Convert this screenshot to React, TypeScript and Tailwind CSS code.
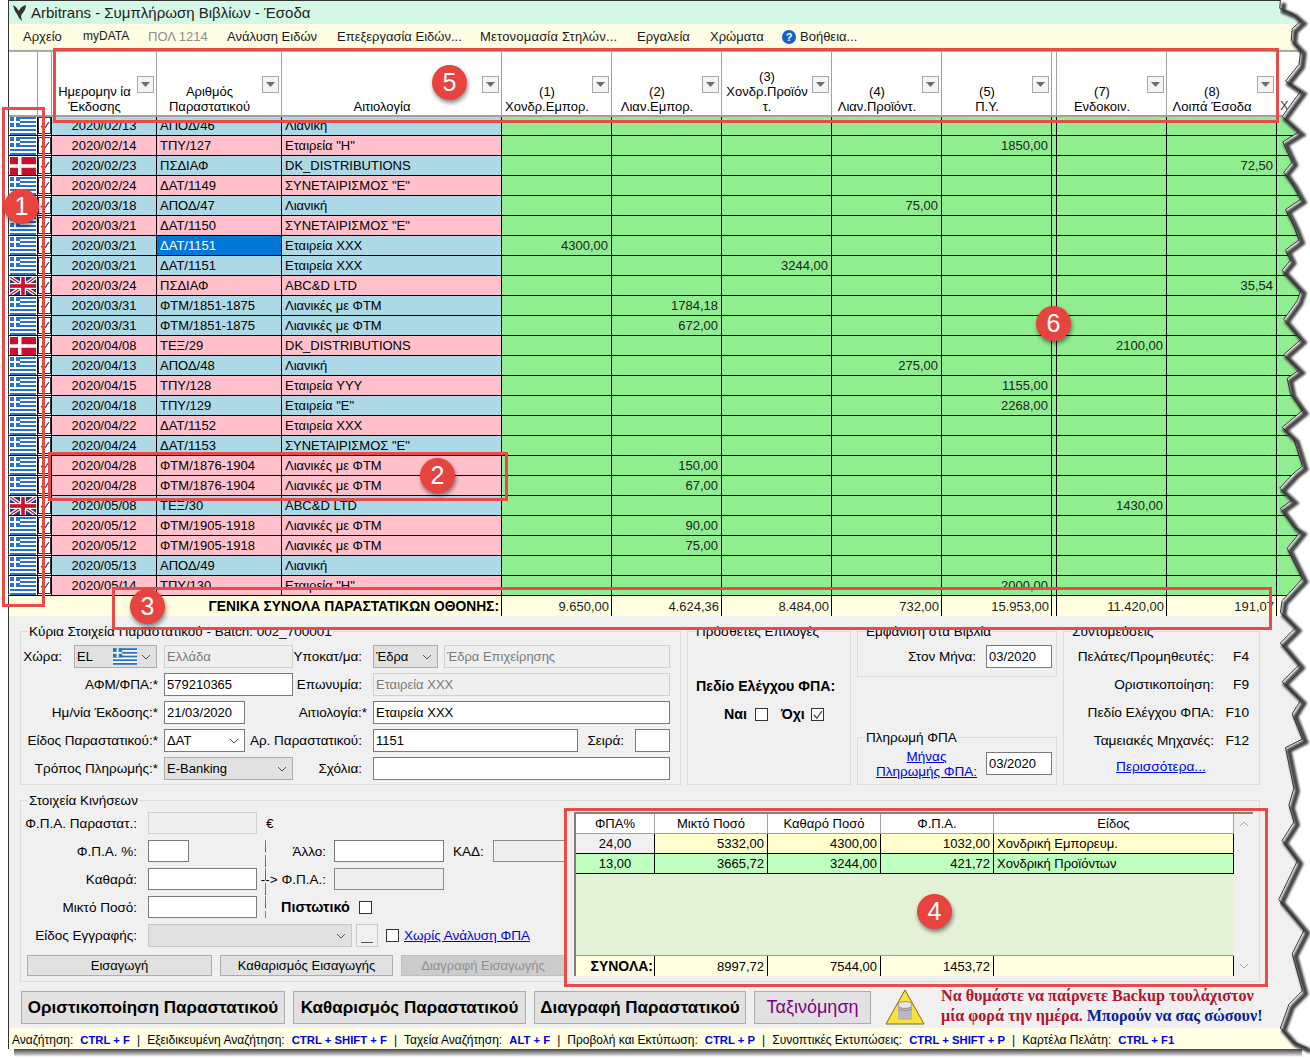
import React from "react";

type Row = { d: string; n: string; r: string; c: "b" | "p"; f?: "gr" | "dk" | "uk"; v?: Record<number, string>; sel?: boolean };

const L1 = "Λιανικές με ΦΤΜ";
const S = 'ΣΥΝΕΤΑΙΡΙΣΜΟΣ "Ε"';
const X = "Εταιρεία ΧΧΧ";
const rows: Row[] = [
  { d: "2020/02/13", n: "ΑΠΟΔ/46", r: "Λιανική", c: "b" },
  { d: "2020/02/14", n: "ΤΠΥ/127", r: 'Εταιρεία "Η"', c: "p", v: { 4: "1850,00" } },
  { d: "2020/02/23", n: "ΠΣΔΙΑΦ", r: "DK_DISTRIBUTIONS", c: "b", f: "dk", v: { 7: "72,50" } },
  { d: "2020/02/24", n: "ΔΑΤ/1149", r: S, c: "p" },
  { d: "2020/03/18", n: "ΑΠΟΔ/47", r: "Λιανική", c: "b", v: { 3: "75,00" } },
  { d: "2020/03/21", n: "ΔΑΤ/1150", r: S, c: "p" },
  { d: "2020/03/21", n: "ΔΑΤ/1151", r: X, c: "b", v: { 0: "4300,00" }, sel: true },
  { d: "2020/03/21", n: "ΔΑΤ/1151", r: X, c: "b", v: { 2: "3244,00" } },
  { d: "2020/03/24", n: "ΠΣΔΙΑΦ", r: "ABC&D LTD", c: "p", f: "uk", v: { 7: "35,54" } },
  { d: "2020/03/31", n: "ΦΤΜ/1851-1875", r: L1, c: "b", v: { 1: "1784,18" } },
  { d: "2020/03/31", n: "ΦΤΜ/1851-1875", r: L1, c: "b", v: { 1: "672,00" } },
  { d: "2020/04/08", n: "ΤΕΞ/29", r: "DK_DISTRIBUTIONS", c: "p", f: "dk", v: { 6: "2100,00" } },
  { d: "2020/04/13", n: "ΑΠΟΔ/48", r: "Λιανική", c: "b", v: { 3: "275,00" } },
  { d: "2020/04/15", n: "ΤΠΥ/128", r: "Εταιρεία YYY", c: "p", v: { 4: "1155,00" } },
  { d: "2020/04/18", n: "ΤΠΥ/129", r: 'Εταιρεία "Ε"', c: "b", v: { 4: "2268,00" } },
  { d: "2020/04/22", n: "ΔΑΤ/1152", r: X, c: "p" },
  { d: "2020/04/24", n: "ΔΑΤ/1153", r: S, c: "b" },
  { d: "2020/04/28", n: "ΦΤΜ/1876-1904", r: L1, c: "p", v: { 1: "150,00" } },
  { d: "2020/04/28", n: "ΦΤΜ/1876-1904", r: L1, c: "p", v: { 1: "67,00" } },
  { d: "2020/05/08", n: "ΤΕΞ/30", r: "ABC&D LTD", c: "b", f: "uk", v: { 6: "1430,00" } },
  { d: "2020/05/12", n: "ΦΤΜ/1905-1918", r: L1, c: "p", v: { 1: "90,00" } },
  { d: "2020/05/12", n: "ΦΤΜ/1905-1918", r: L1, c: "p", v: { 1: "75,00" } },
  { d: "2020/05/13", n: "ΑΠΟΔ/49", r: "Λιανική", c: "b" },
  { d: "2020/05/14", n: "ΤΠΥ/130", r: 'Εταιρεία "Η"', c: "p", v: { 4: "2000,00" } },
];

const numW = ["w-[110px]", "w-[110px]", "w-[110px]", "w-[110px]", "w-[110px]", "w-[5px]", "w-[110px]", "w-[110px]"];
const numMap = [0, 1, 2, 3, 4, -1, 6, 7];
const totals = ["9.650,00", "4.624,36", "8.484,00", "732,00", "15.953,00", "", "11.420,00", "191,07"];
const heads: { l: string[]; w: string }[] = [
  { l: ["(1)", "Χονδρ.Εμπορ."], w: "w-[110px]" },
  { l: ["(2)", "Λιαν.Εμπορ."], w: "w-[110px]" },
  { l: ["(3)", "Χονδρ.Προϊόν", "τ."], w: "w-[110px]" },
  { l: ["(4)", "Λιαν.Προϊόντ."], w: "w-[110px]" },
  { l: ["(5)", "Π.Υ."], w: "w-[110px]" },
  { l: [], w: "w-[5px]" },
  { l: ["(7)", "Ενδοκοιν."], w: "w-[110px]" },
  { l: ["(8)", "Λοιπά Έσοδα"], w: "w-[110px]" },
];
const bar = "w-[1px] bg-[repeating-linear-gradient(to_bottom,#a88a4a_0,#6b5a35_12px,transparent_12px,transparent_15px)]";

function Flag({ k = "gr", w = 26, h = 18 }: { k?: "gr" | "dk" | "uk"; w?: number; h?: number }) {
  if (k === "dk")
    return (
      <svg width={w} height={h} viewBox="0 0 26 18">
        <rect width="26" height="18" fill="#c8102e" />
        <rect x="8" width="3.5" height="18" fill="#fff" />
        <rect y="7.25" width="26" height="3.5" fill="#fff" />
      </svg>
    );
  if (k === "uk")
    return (
      <svg width={w} height={h} viewBox="0 0 26 18">
        <rect width="26" height="18" fill="#1f3a7a" />
        <path d="M0 0L26 18M26 0L0 18" stroke="#fff" strokeWidth="3.6" />
        <path d="M0 0L26 18M26 0L0 18" stroke="#c8102e" strokeWidth="1.3" />
        <rect x="10" width="6" height="18" fill="#fff" />
        <rect y="6" width="26" height="6" fill="#fff" />
        <rect x="11.2" width="3.6" height="18" fill="#c8102e" />
        <rect y="7.2" width="26" height="3.6" fill="#c8102e" />
      </svg>
    );
  const st = [0, 2, 4, 6, 8];
  return (
    <svg width={w} height={h} viewBox="0 0 26 18">
      <rect width="26" height="18" fill="#fff" />
      {st.map((i) => (
        <rect key={i} y={i * 2} width="26" height="2" fill="#2a72c4" />
      ))}
      <rect width="10" height="10" fill="#2a72c4" />
      <rect x="4" width="2" height="10" fill="#fff" />
      <rect y="4" width="10" height="2" fill="#fff" />
    </svg>
  );
}

function Chk({ on = true, s = "w-[13px] h-[13px]", c = "#444" }: { on?: boolean; s?: string; c?: string }) {
  return (
    <span className={`${s} shrink-0 bg-white border border-[#333] flex items-center justify-center`}>
      {on && (
        <svg width="10" height="10" viewBox="0 0 9 9" className="shrink-0">
          <path d="M1 4.5L3.5 7.5L8 1" fill="none" stroke={c} strokeWidth="1.1" />
        </svg>
      )}
    </span>
  );
}

function Chev({ c = "#555" }: { c?: string }) {
  return (
    <svg width="10" height="6" viewBox="0 0 10 6" className="shrink-0">
      <path d="M1 1L5 5L9 1" fill="none" stroke={c} strokeWidth="1" />
    </svg>
  );
}

function Lab({ w, children, cn = "" }: { w: string; children: React.ReactNode; cn?: string }) {
  return <span className={`${w} shrink-0 flex justify-end whitespace-nowrap ${cn}`}>{children}</span>;
}

function Inp({ w, v = "", dis = false, dark = false }: { w: string; v?: string; dis?: boolean; dark?: boolean }) {
  const st = dis
    ? "bg-[#efefef] border-[#d0d0d0] text-[#7a7a7a]"
    : dark
    ? "bg-[#efefef] border-[#8a8a8a]"
    : "bg-white border-[#7a7a7a]";
  return <span className={`${w} h-full shrink-0 border px-[2px] flex items-center whitespace-nowrap overflow-hidden text-[13px] ${st}`}>{v}</span>;
}

function Sel({ w, v, bg = "bg-[#e1e1e1] border-[#adadad]", flag = false, cn = "" }: { w: string; v: string; bg?: string; flag?: boolean; cn?: string }) {
  return (
    <span className={`${w} h-full shrink-0 border px-[2px] flex items-center text-[13px] ${bg} ${cn}`}>
      <span className="grow whitespace-nowrap">{v}</span>
      {flag && <span className="mr-[4px] flex"><Flag w={24} h={17} /></span>}
      <span className="mr-[3px] flex"><Chev /></span>
    </span>
  );
}

function Group({ title, w, h, children, cn = "" }: { title: string; w: string; h: string; children?: React.ReactNode; cn?: string }) {
  return (
    <div className={`${w} ${h} shrink-0 relative border border-[#dcdcdc] ${cn}`}>
      <span className="absolute left-[7px] top-[-8px] bg-[#f0f0f0] px-[1px] leading-[15px] whitespace-nowrap">{title}</span>
      {children}
    </div>
  );
}

function Red({ cn }: { cn: string }) {
  return <div className={`absolute border-[3px] border-[#e94c48] pointer-events-none ${cn}`} />;
}
function Dot({ n, cn }: { n: string; cn: string }) {
  return (
    <div className={`absolute w-[35px] h-[35px] rounded-full bg-[#e8443f] text-white text-[25px] leading-[35px] text-center shadow-[1px_3px_4px_rgba(0,0,0,0.45)] ${cn}`}>{n}</div>
  );
}

const Key = ({ t }: { t: string }) => <span className="font-bold text-[11.3px] text-[#0000e6] ml-[7px]">{t}</span>;
const Sep = () => <span className="mx-[7px]">|</span>;

const e1: [number, number][] = [[90,0],[88,25],[125,40],[150,62],[125,85],[122,120],[150,150],[145,190],[105,240],[150,270],[135,290],[95,345],[145,390],[97,420],[125,480],[100,510],[125,545],[150,590],[105,620],[130,670],[145,710],[105,740],[120,770],[95,800],[150,860],[140,890],[100,945],[150,1005],[100,1050],[145,1095],[110,1120],[120,1165],[155,1215],[95,1265],[130,1300],[155,1380],[130,1400],[88,1445],[125,1480],[90,1505],[130,1560]];
const e2: [number, number][] = [[150,10],[110,60],[155,150],[95,215],[90,250],[135,295],[90,340],[145,405],[95,455],[150,510],[125,550],[155,625],[105,650],[130,770],[115,820],[130,870],[95,925],[140,985],[85,1100],[160,1190],[125,1260],[155,1370],[115,1410],[90,1480],[125,1520],[170,1540]];
const edge = [
  ...e1.map(([x, y]) => [1250 + x / 2.96, y / 2.96]),
  ...e2.map(([x, y]) => [1250 + x / 2.96, 528 + y / 2.96]),
].map(([x, y]) => `${x.toFixed(1)},${y.toFixed(1)}`).join(" ");

export default function App() {
  return (
    <div className="relative w-[1310px] h-[1058px] bg-white overflow-hidden text-[13px] text-black font-[Liberation_Sans,Arial,sans-serif] leading-[15px]">
      <div className="ml-[8px] w-[1302px] h-[1049px] border-l border-t border-b border-[#333] bg-[#f0f0f0] flex flex-col">
        {/* title */}
        <div className="h-[23px] shrink-0 bg-[#d3f9e6] flex items-center pl-[3px] text-[15px]">
          <svg width="16" height="18" viewBox="0 0 16 18" className="mr-[3px]">
            <path d="M1 1C3 2 5 4 7 7C8 4 10 2 14 1C14 4 12 8 10 10L9 12L10 17L7 14L5 10C3 8 2 4 1 1Z" fill="#333" />
          </svg>
          <span className="text-[#222]">Arbitrans - Συμπλήρωση Βιβλίων - Έσοδα</span>
        </div>
        {/* menu */}
        <div className="h-[25px] shrink-0 bg-[#fdfde3] flex items-center pl-[14px] gap-[20px] text-[#1a1a1a] whitespace-nowrap">
          <span className="w-[40px]">Αρχείο</span>
          <span className="w-[45px] text-[12px]">myDATA</span>
          <span className="w-[59px] text-[#8f8f8f]">ΠΟΛ 1214</span>
          <span className="w-[90px]">Ανάλυση Ειδών</span>
          <span className="w-[123px]">Επεξεργασία Ειδών...</span>
          <span className="w-[137px] tracking-[0.2px]">Μετονομασία Στηλών...</span>
          <span className="w-[53px]">Εργαλεία</span>
          <span className="w-[56px]">Χρώματα</span>
          <span className="flex items-center gap-[4px] -ml-[4px]">
            <span className="w-[14px] h-[14px] rounded-full bg-[#1762c0] text-white font-bold text-[11px] leading-[14px] text-center">?</span>
            Βοήθεια...
          </span>
        </div>
        <div className="h-[3px] shrink-0 border-b-2 border-[#a9a9a9] bg-[#f0f0f0]" />
        {/* header */}
        <div className="h-[65px] shrink-0 bg-white border-b-2 border-[#a0a0a0] flex">
          <div className="w-[29px] shrink-0 border-r border-[#a0a0a0]" />
          <div className="w-[14px] shrink-0 border-r border-[#a0a0a0]" />
          {[
            { l: ["Ημερομην ία", "Έκδοσης"], w: "w-[105px]" },
            { l: ["Αριθμός", "Παραστατικού"], w: "w-[125px]" },
            { l: ["Αιτιολογία"], w: "w-[220px]" },
            ...heads,
          ].map((h, i) => (
            <div key={i} className={`${h.w} shrink-0 relative border-r border-[#a0a0a0] flex flex-col items-center justify-end pb-[1px] ${h.l.length > 0 ? "pr-[19px]" : ""} text-center`}>
              {h.l.map((t) => (
                <span key={t} className="whitespace-nowrap">{t}</span>
              ))}
              {h.l.length > 0 && (
                <span className="absolute top-[24px] right-[2px] w-[17px] h-[17px] bg-[#f4f4f4] border border-[#a8a8a8] flex items-center justify-center">
                  <svg width="9" height="5" viewBox="0 0 9 5"><path d="M0 0H9L4.5 5Z" fill="#6d6d6d" /></svg>
                </span>
              )}
            </div>
          ))}
          <div className="grow pt-[46px] pl-[3px] text-[#445]">Χ</div>
        </div>
        {/* body */}
        <div className="h-[479px] shrink-0 overflow-hidden">
          <div className="-mt-[1px]">
            {rows.map((r, i) => {
              const bg = r.c === "b" ? "bg-[#add8e6]" : "bg-[#ffc0cb]";
              return (
                <div key={i} className="h-[20px] flex border-b border-black bg-[#90ee90]">
                  <div className="w-[29px] shrink-0 bg-white border-r border-black flex items-center pl-[1px]"><Flag k={r.f ?? "gr"} /></div>
                  <div className="w-[14px] shrink-0 bg-white border-r border-black flex items-center justify-center"><Chk s="w-[13px] h-[17px]" /></div>
                  <div className={`w-[105px] shrink-0 ${bg} border-r border-black flex items-center justify-center`}>{r.d}</div>
                  <div className={`w-[125px] shrink-0 ${r.sel ? "bg-[#0078d7] text-white" : bg} border-r border-black flex items-center pl-[3px]`}>{r.n}</div>
                  <div className={`w-[220px] shrink-0 ${bg} border-r border-black flex items-center pl-[3px]`}>{r.r}</div>
                  {numW.map((w, k) => (
                    <div key={k} className={`${w} shrink-0 border-r border-black flex items-center justify-end pr-[3px] text-[#1c1c1c]`}>
                      {numMap[k] >= 0 ? r.v?.[numMap[k]] : null}
                    </div>
                  ))}
                  <div className="grow" />
                </div>
              );
            })}
          </div>
        </div>
        {/* totals */}
        <div className="h-[20px] shrink-0 flex bg-[#ffffe0]">
          <div className="w-[43px] shrink-0" />
          <div className="w-[450px] shrink-0 border-r border-black flex items-center justify-end pr-[2px] font-bold text-[13.8px] whitespace-nowrap">ΓΕΝΙΚΑ ΣΥΝΟΛΑ ΠΑΡΑΣΤΑΤΙΚΩΝ ΟΘΟΝΗΣ:</div>
          {numW.map((w, k) => (
            <div key={k} className={`${w} shrink-0 border-r border-black flex items-center justify-end pr-[2px] text-[#1c1c1c]`}>{totals[k]}</div>
          ))}
        </div>

        {/* form top row */}
        <div className="mt-[15px] ml-[11px] flex gap-[6px] h-[154px] shrink-0 text-[13.5px]">
          <Group title="Κύρια Στοιχεία Παραστατικού - Batch: 002_700001" w="w-[661px]" h="h-[154px]">
            <div className="pt-[13px] flex flex-col gap-[5px]">
              <div className="h-[23px] flex items-center">
                <Lab w="w-[41px]">Χώρα:</Lab>
                <Sel w="w-[83px] ml-[12px]" v="EL" flag bg="bg-[#e1e1e1] border-[#adadad]" />
                <span className="ml-[7px] h-full flex"><Inp w="w-[129px]" v="Ελλάδα" dis /></span>
                <Lab w="w-[69px]">Υποκατ/μα:</Lab>
                <Sel w="w-[65px] ml-[11px]" v="Έδρα" />
                <span className="ml-[6px] h-full flex"><Inp w="w-[226px]" v="Έδρα Επιχείρησης" dis /></span>
              </div>
              <div className="h-[23px] flex items-center">
                <Lab w="w-[137px]">ΑΦΜ/ΦΠΑ:*</Lab>
                <span className="ml-[6px] h-full flex"><Inp w="w-[129px]" v="579210365" /></span>
                <Lab w="w-[69px]">Επωνυμία:</Lab>
                <span className="ml-[11px] h-full flex"><Inp w="w-[297px]" v="Εταιρεία ΧΧΧ" dis /></span>
              </div>
              <div className="h-[23px] flex items-center">
                <Lab w="w-[137px]">Ημ/νία Έκδοσης:*</Lab>
                <span className="ml-[6px] h-full flex"><Inp w="w-[81px]" v="21/03/2020" /></span>
                <Lab w="w-[122px]">Αιτιολογία:*</Lab>
                <span className="ml-[6px] h-full flex"><Inp w="w-[297px]" v="Εταιρεία ΧΧΧ" /></span>
              </div>
              <div className="h-[23px] flex items-center">
                <Lab w="w-[137px]">Είδος Παραστατικού:*</Lab>
                <Sel w="w-[81px] ml-[6px]" v="ΔΑΤ" bg="bg-white border-[#7a7a7a]" />
                <Lab w="w-[117px]">Αρ. Παραστατικού:</Lab>
                <span className="ml-[11px] h-full flex"><Inp w="w-[205px]" v="1151" /></span>
                <Lab w="w-[46px]">Σειρά:</Lab>
                <span className="ml-[11px] h-full flex"><Inp w="w-[35px]" /></span>
              </div>
              <div className="h-[23px] flex items-center">
                <Lab w="w-[137px]">Τρόπος Πληρωμής:*</Lab>
                <Sel w="w-[129px] ml-[6px]" v="E-Banking" />
                <Lab w="w-[69px]">Σχόλια:</Lab>
                <span className="ml-[11px] h-full flex"><Inp w="w-[297px]" /></span>
              </div>
            </div>
          </Group>

          <Group title="Πρόσθετες Επιλογές" w="w-[164px]" h="h-[154px]">
            <div className="pt-[47px] pl-[8px] font-bold text-[14.2px] whitespace-nowrap">Πεδίο Ελέγχου ΦΠΑ:</div>
            <div className="mt-[13px] pl-[36px] flex items-center font-bold text-[14.2px]">
              <span className="w-[31px]">Ναι</span>
              <Chk on={false} />
              <span className="ml-[13px] w-[30px]">Όχι</span>
              <Chk />
            </div>
          </Group>

          <div className="w-[200px] shrink-0 h-[154px] flex flex-col justify-between">
            <Group title="Εμφάνιση στα Βιβλία" w="w-[200px]" h="h-[46px]">
              <div className="pt-[13px] h-[36px] flex">
                <Lab w="w-[118px]" cn="items-center">Στον Μήνα:</Lab>
                <span className="ml-[10px] flex"><Inp w="w-[66px]" v="03/2020" /></span>
              </div>
            </Group>
            <Group title="Πληρωμή ΦΠΑ" w="w-[200px]" h="h-[48px]">
              <div className="pt-[13px] h-[38px] flex items-center">
                <span className="ml-[19px] w-[99px] flex flex-col items-center text-[#0000e6] underline whitespace-nowrap">
                  <span>Μήνας</span>
                  <span>Πληρωμής ΦΠΑ:</span>
                </span>
                <span className="ml-[10px] h-[23px] flex"><Inp w="w-[66px]" v="03/2020" /></span>
              </div>
            </Group>
          </div>

          <Group title="Συντομεύσεις" w="w-[197px]" h="h-[154px]" cn="text-[13.7px]">
            <div className="pt-[10px] flex flex-col">
              {[
                ["Πελάτες/Προμηθευτές:", "F4"],
                ["Οριστικοποίηση:", "F9"],
                ["Πεδίο Ελέγχου ΦΠΑ:", "F10"],
                ["Ταμειακές Μηχανές:", "F12"],
              ].map(([a, b]) => (
                <div key={a} className="h-[28px] flex items-center whitespace-nowrap">
                  <Lab w="w-[150px]">{a}</Lab>
                  <span className="w-[35px] text-right">{b}</span>
                </div>
              ))}
              <div className="h-[24px] pl-[52px] flex items-center text-[#0000e6] underline">Περισσότερα...</div>
            </div>
          </Group>
        </div>

        {/* movements */}
        <div className="mt-[15px] ml-[11px] shrink-0 text-[13.5px]">
          <Group title="Στοιχεία Κινήσεων" w="w-[1240px]" h="h-[182px]" cn="flex">
            <div className="w-[553px] shrink-0 pt-[11px] flex flex-col">
              <div className="h-[22px] flex items-center">
                <Lab w="w-[116px]">Φ.Π.Α. Παραστατ.:</Lab>
                <span className="ml-[11px] h-full flex"><Inp w="w-[109px]" dis /></span>
                <span className="ml-[9px]">€</span>
              </div>
              <div className="h-[22px] mt-[6px] flex items-center">
                <Lab w="w-[116px]">Φ.Π.Α. %:</Lab>
                <span className="ml-[11px] h-full flex"><Inp w="w-[41px]" /></span>
                <span className={`ml-[76px] h-[28px] -mb-[6px] ${bar}`} />
                <Lab w="w-[60px]">Άλλο:</Lab>
                <span className="ml-[8px] h-full flex"><Inp w="w-[110px]" /></span>
                <span className="ml-[9px] w-[40px]">ΚΑΔ:</span>
                <span className="h-full flex"><Inp w="w-[72px]" dark /></span>
              </div>
              <div className="h-[22px] mt-[6px] flex items-center">
                <Lab w="w-[116px]">Καθαρά:</Lab>
                <span className="ml-[11px] h-full flex"><Inp w="w-[109px]" /></span>
                <span className={`ml-[8px] h-[28px] -mb-[6px] ${bar}`} />
                <Lab w="w-[60px]">--&gt; Φ.Π.Α.:</Lab>
                <span className="ml-[8px] h-full flex"><Inp w="w-[110px]" dark /></span>
              </div>
              <div className="h-[22px] mt-[6px] flex items-center">
                <Lab w="w-[116px]">Μικτό Ποσό:</Lab>
                <span className="ml-[11px] h-full flex"><Inp w="w-[109px]" /></span>
                <span className={`ml-[8px] h-full ${bar}`} />
                <span className="ml-[15px] w-[70px] font-bold text-[14.4px] whitespace-nowrap">Πιστωτικό</span>
                <span className="ml-[8px]"><Chk on={false} /></span>
              </div>
              <div className="h-[23px] mt-[6px] flex items-center">
                <Lab w="w-[116px]">Είδος Εγγραφής:</Lab>
                <Sel w="w-[204px] ml-[11px]" v="" bg="bg-[#e1e1e1] border-[#c8c8c8]" />
                <span className="ml-[4px] w-[22px] h-full border border-[#c8c8c8] bg-[#f0f0f0] flex items-end justify-center pb-[3px]">
                  <span className="w-[12px] h-[1px] bg-[#555]" />
                </span>
                <span className="ml-[8px]"><Chk on={false} /></span>
                <span className="ml-[5px] text-[#0000e6] underline whitespace-nowrap">Χωρίς Ανάλυση ΦΠΑ</span>
              </div>
              <div className="h-[21px] mt-[8px] ml-[6px] flex text-[13px]">
                <span className="w-[185px] bg-[#e1e1e1] border border-[#adadad] flex items-center justify-center">Εισαγωγή</span>
                <span className="ml-[8px] w-[173px] bg-[#e1e1e1] border border-[#adadad] flex items-center justify-center">Καθαρισμός Εισαγωγής</span>
                <span className="ml-[8px] w-[164px] bg-[#cccccc] border border-[#bfbfbf] text-[#8f8f8f] flex items-center justify-center">Διαγραφή Εισαγωγής</span>
              </div>
            </div>
            {/* vat grid */}
            <div className="w-[679px] h-[164px] mt-[11px] shrink-0 border-l-2 border-t-2 border-[#808080] flex text-[13px]">
              <div className="w-[658px] shrink-0 flex flex-col bg-[#e4f3d7]">
                {[
                  { c: ["ΦΠΑ%", "Μικτό Ποσό", "Καθαρό Ποσό", "Φ.Π.Α.", "Είδος"], bg: "bg-white", h: true, first: "" },
                  { c: ["24,00", "5332,00", "4300,00", "1032,00", "Χονδρική Εμπορευμ."], bg: "bg-[#ffffcc]", h: false, first: "bg-[#f0f0f0]" },
                  { c: ["13,00", "3665,72", "3244,00", "421,72", "Χονδρική Προϊόντων"], bg: "bg-[#bfffbf]", h: false, first: "" },
                ].map((r, i) => (
                  <div key={i} className={`h-[20px] flex ${r.bg} border-b ${r.h ? "border-[#a0a0a0]" : "border-black"}`}>
                    {r.c.map((t, k) => (
                      <span
                        key={k}
                        className={`${["w-[79px]", "w-[113px]", "w-[113px]", "w-[113px]", "w-[240px]"][k]} shrink-0 border-r ${r.h ? "border-[#a0a0a0] justify-center" : "border-black"} flex items-center ${
                          !r.h && k === 0 ? "justify-center " + r.first : ""
                        } ${!r.h && k > 0 && k < 4 ? "justify-end pr-[3px]" : ""} ${!r.h && k === 4 ? "pl-[3px]" : ""}`}
                      >
                        {t}
                      </span>
                    ))}
                  </div>
                ))}
                <div className="grow" />
                <div className="h-[21px] flex bg-[#ffffe0] border-t border-[#a0a0a0]">
                  <span className="w-[79px] shrink-0 border-r border-black flex items-center justify-end pr-[1px] font-bold text-[14px] whitespace-nowrap">ΣΥΝΟΛΑ:</span>
                  {["8997,72", "7544,00", "1453,72"].map((t) => (
                    <span key={t} className="w-[113px] shrink-0 border-r border-black flex items-center justify-end pr-[3px]">{t}</span>
                  ))}
                  <span className="w-[240px] shrink-0 border-r border-black" />
                </div>
              </div>
              <div className="w-[19px] shrink-0 bg-[#f0f0f0] flex flex-col justify-between items-center py-[7px]">
                <span className="rotate-180 flex"><Chev c="#a8a8a8" /></span>
                <Chev c="#a8a8a8" />
              </div>
            </div>
          </Group>
        </div>

        {/* big buttons */}
        <div className="mt-[9px] ml-[12px] h-[33px] shrink-0 flex text-[17px] font-bold">
          <span className="w-[264px] bg-[#e1e1e1] border border-[#adadad] flex items-center justify-center whitespace-nowrap">Οριστικοποίηση Παραστατικού</span>
          <span className="ml-[8px] w-[233px] bg-[#e1e1e1] border border-[#adadad] flex items-center justify-center whitespace-nowrap">Καθαρισμός Παραστατικού</span>
          <span className="ml-[8px] w-[212px] bg-[#e1e1e1] border border-[#adadad] flex items-center justify-center whitespace-nowrap">Διαγραφή Παραστατικού</span>
          <span className="ml-[8px] w-[117px] bg-[#e1e1e1] border border-[#adadad] text-[18px] text-[#800080] font-normal flex items-center justify-center whitespace-nowrap">Ταξινόμηση</span>
          <span className="ml-[14px] w-[40px] -mt-[2px] flex">
            <svg width="40" height="36" viewBox="0 0 40 36">
              <path d="M20 1L39 35H1Z" fill="#fde03a" stroke="#7a6a20" strokeWidth="1" />
              <rect x="13" y="15" width="14" height="16" rx="2" fill="#b9b9b9" />
              <ellipse cx="20" cy="16" rx="7" ry="3.5" fill="#e6e6e6" stroke="#777" strokeWidth=".7" />
              <path d="M13 20C16 22 24 22 27 20" fill="none" stroke="#888" strokeWidth=".8" />
            </svg>
          </span>
          <div className="ml-[16px] w-[340px] flex flex-col font-bold text-[16.15px] leading-[20px] font-[Liberation_Serif,serif] -mt-[5px] whitespace-nowrap">
            <span className="text-[#b3132d]">Να θυμάστε να παίρνετε Backup τουλάχιστον</span>
            <span className="text-[#b3132d]">
              μία φορά την ημέρα. <span className="text-[#0a1c96]">Μπορούν να σας σώσουν!</span>
            </span>
          </div>
        </div>

        {/* status */}
        <div className="mt-[4px] h-[21px] shrink-0 bg-[#ffffe6] flex items-center pl-[3px] pt-[3px] text-[12px] whitespace-nowrap">
          <span>Αναζήτηση:</span><Key t="CTRL + F" /><Sep />
          <span>Εξειδικευμένη Αναζήτηση:</span><Key t="CTRL + SHIFT + F" /><Sep />
          <span>Ταχεία Αναζήτηση:</span><Key t="ALT + F" /><Sep />
          <span>Προβολή και Εκτύπωση:</span><Key t="CTRL + P" /><Sep />
          <span>Συνοπτικές Εκτυπώσεις:</span><Key t="CTRL + SHIFT + P" /><Sep />
          <span>Καρτέλα Πελάτη:</span><Key t="CTRL + F1" />
        </div>
      </div>
      <div className="ml-[14px] mr-[8px] h-[8px] bg-gradient-to-b from-[#444] to-white" />

      {/* torn right edge */}
      <svg className="absolute left-0 top-0 pointer-events-none" width="1310" height="1058" viewBox="0 0 1310 1058">
        <defs>
          <filter id="bl" x="-5%" y="-1%" width="110%" height="102%"><feGaussianBlur stdDeviation="1" /></filter>
        </defs>
        <polygon points={`${edge} 1310,1048 1310,0`} fill="#fff" />
        <polyline points={edge} transform="translate(3.5,3)" fill="none" stroke="#444" strokeWidth="5" filter="url(#bl)" />
        <polygon points={`${edge} 1200,1048 1200,0`} fill="none" />
        <polyline points={edge} fill="none" stroke="#222" strokeWidth="0.9" />
      </svg>

      {/* annotations */}
      <Red cn="left-[2px] top-[107px] w-[43px] h-[500px]" />
      <Red cn="left-[48px] top-[452px] w-[460px] h-[49px]" />
      <Red cn="left-[112px] top-[587px] w-[1160px] h-[43px]" />
      <Red cn="left-[53px] top-[48px] w-[1226px] h-[75px]" />
      <Red cn="left-[564px] top-[808px] w-[704px] h-[179px]" />
      <Dot n="1" cn="left-[4px] top-[189px]" />
      <Dot n="2" cn="left-[420px] top-[458px]" />
      <Dot n="3" cn="left-[130px] top-[589px]" />
      <Dot n="4" cn="left-[917px] top-[894px]" />
      <Dot n="5" cn="left-[432px] top-[65px]" />
      <Dot n="6" cn="left-[1036px] top-[306px]" />
    </div>
  );
}
